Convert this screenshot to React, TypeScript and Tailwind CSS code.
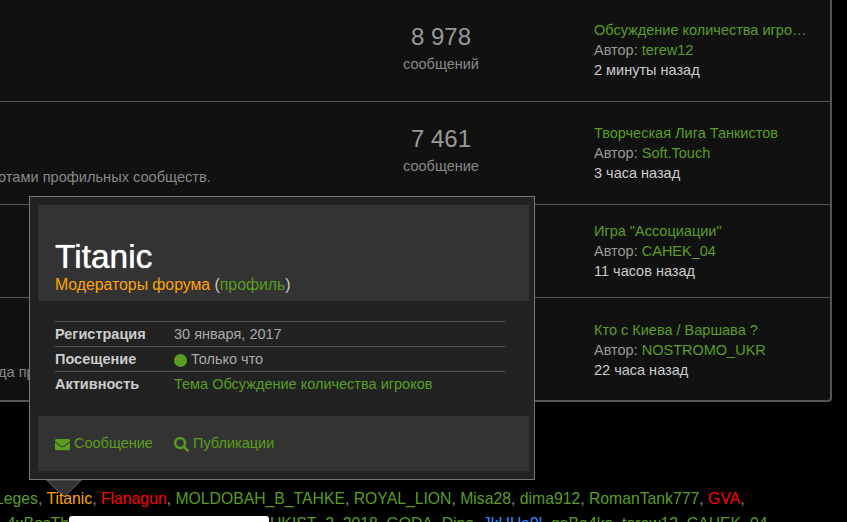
import React from 'react';
import { FaEnvelope, FaSearch } from 'react-icons/fa';

interface ForumRow {
  height: string;
  count: string;
  label: string;
  topic: string;
  author: string;
  time: string;
  postClass?: string;
  note?: React.ReactNode;
}

const rows: ForumRow[] = [
  { height: 'h-[102px] border-b', count: '8 978', label: 'сообщений', topic: 'Обсуждение количества игроков', author: 'terew12', time: '2 минуты назад', postClass: 'mb-[2px]' },
  {
    height: 'h-[103px] border-b',
    count: '7 461',
    label: 'сообщение',
    topic: 'Творческая Лига Танкистов',
    author: 'Soft.Touch',
    time: '3 часа назад',
    note: <div className="absolute left-[6px] top-[65px] whitespace-nowrap">отами профильных сообществ.</div>,
  },
  { height: 'h-[93px] border-b', count: '', label: '', topic: 'Игра "Ассоциации"', author: 'CAHEK_04', time: '11 часов назад' },
  {
    height: 'h-[102px]',
    count: '',
    label: '',
    topic: 'Кто с Киева / Варшава ?',
    author: 'NOSTROMO_UKR',
    time: '22 часа назад',
    postClass: 'mt-[2px]',
    note: <div className="absolute left-[6px] top-[64px] whitespace-nowrap">да проводятся турниры</div>,
  },
];

const green = 'text-[#5a9e1f]';

function Row({ row }: { row: ForumRow }) {
  return (
    <div className={`relative flex items-center border-[#555] ${row.height}`}>
      <div className="flex-1 self-stretch text-[14.6px] text-[#888]">{row.note}</div>
      <div className="mb-[6px] mr-[93px] w-[120px] text-center">
        {row.count && (
          <>
            <div className="text-[24px] leading-[32px] text-[#999]">{row.count}</div>
            <div className="text-[14.5px] leading-[22px] text-[#888]">{row.label}</div>
          </>
        )}
      </div>
      <div className={`mr-[23px] w-[213px] text-[14.5px] leading-[20px] ${row.postClass ?? ''}`}>
        <div className={`truncate ${green}`}>{row.topic}</div>
        <div className="text-[#999]">
          Автор: <span className={green}>{row.author}</span>
        </div>
        <div className="text-[#ccc]">{row.time}</div>
      </div>
    </div>
  );
}

function Comma() {
  return <span className="text-[#888]">, </span>;
}

function ProfileCard() {
  return (
    <div className="absolute left-[29px] top-[196px] z-20 h-[284px] w-[506px] border border-[#777] bg-[#222] pl-[8px] pr-[5px] pt-[8px] text-[14.5px]">
      <div className="flex h-[96px] flex-col justify-end bg-[#333] px-[17px] pb-[6px]">
        <div className="text-[33.5px] leading-[36px] text-white [text-shadow:0_0_1px_#fff]">Titanic</div>
        <div className="text-[15.8px] leading-[20px] text-[#ccc]">
          <span className="text-[#ffa500]">Модераторы форума</span> (<span className={green}>профиль</span>)
        </div>
      </div>
      <div className="ml-[17px] mr-[24px] mt-[20px]">
        <div className="grid h-[25px] grid-cols-[119px_1fr] items-center border-t border-[#555] pt-[2px]">
          <span className="font-bold text-[#ccc]">Регистрация</span>
          <span className="text-[#aaa]">30 января, 2017</span>
        </div>
        <div className="grid h-[25px] grid-cols-[119px_1fr] items-center border-t border-[#555] pt-[2px]">
          <span className="font-bold text-[#ccc]">Посещение</span>
          <span className="flex items-center gap-[4px] text-[#aaa]">
            <span className="h-[13px] w-[13px] rounded-full bg-[#5a9e1f]" />
            Только что
          </span>
        </div>
        <div className="grid h-[25px] grid-cols-[119px_1fr] items-center border-t border-[#555] pt-[2px]">
          <span className="font-bold text-[#ccc]">Активность</span>
          <span className={green}>Тема Обсуждение количества игроков</span>
        </div>
      </div>
      <div className={`mt-[20px] flex h-[55px] items-center bg-[#333] px-[17px] pt-[1px] ${green}`}>
        <span className="flex w-[119px] items-center gap-[4px]">
          <FaEnvelope className="h-[15px] w-[15px]" />
          Сообщение
        </span>
        <span className="flex items-center gap-[4px]">
          <FaSearch className="h-[15px] w-[15px]" />
          Публикации
        </span>
      </div>
    </div>
  );
}

export default function App() {
  return (
    <div className="relative h-[522px] w-[847px] overflow-hidden bg-black [font-family:'Liberation_Sans',Arial,sans-serif]">
      <div className="ml-[-10px] w-[842px] rounded-br-[4px] border-x-2 border-b-2 border-[#555] bg-[#111]">
        {rows.map((row) => (
          <Row key={row.topic} row={row} />
        ))}
      </div>

      {/* who is online */}
      <div className={`relative z-10 mt-[86px] whitespace-nowrap text-[15.75px] leading-[22px] ${green}`}>
        <div className="ml-[-5px]">
          Leges<Comma /><span className="text-[#ffa500]">Titanic</span><Comma />
          <span className="text-[#f00]">Flanagun</span><Comma />MOLDOBAH_B_TAHKE<Comma />ROYAL_LION<Comma />
          Misa28<Comma />dima912<Comma />RomanTank777<Comma /><span className="text-[#f00]">GVA</span><Comma />
        </div>
        <div className="mt-[3px] flex">
          <span className="flex w-[69px] justify-end">4xBosTh</span>
          <span className="mt-[3px] h-[22px] w-[200px] rounded-t-[3px] bg-white" />
          <span className="ml-[1px]">
            UKIST_2_2018<Comma />GODA<Comma />Dino<Comma /><span className="text-[#2a8fff]">JkUHa9l</span><Comma />
            gaBo4ka<Comma />terew12<Comma />CAHEK_04
          </span>
        </div>
      </div>

      <svg className="absolute left-[46px] top-[480px] z-0" width="36" height="18" viewBox="0 0 36 18">
        <path d="M0.5 0 L18 17 L35.5 0 Z" fill="#333" stroke="#666" />
      </svg>
      <ProfileCard />
    </div>
  );
}
